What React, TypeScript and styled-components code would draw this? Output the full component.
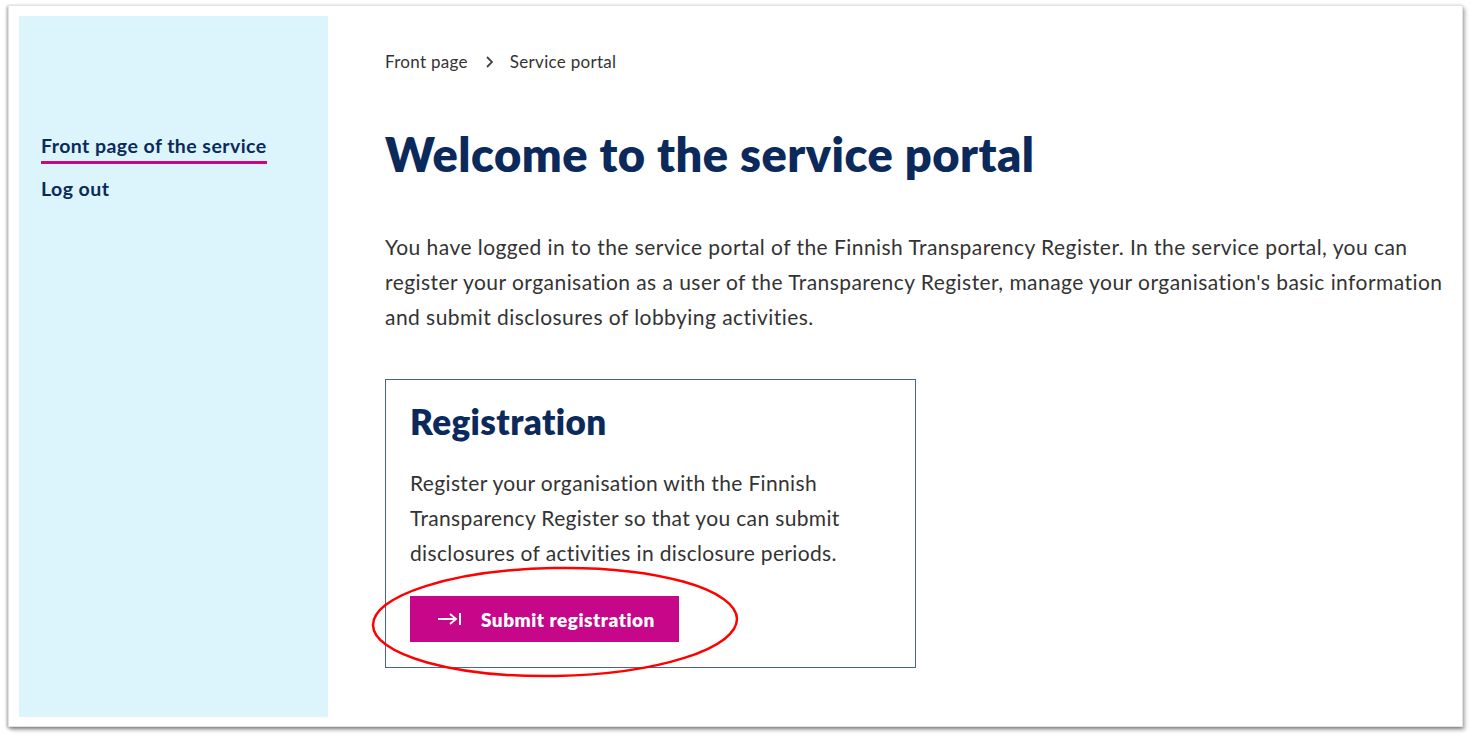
import React from "react";
import styled, { createGlobalStyle } from "styled-components";

const Global = createGlobalStyle`
  html, body { margin: 0; padding: 0; background: #ffffff; }
  body { font-family: Lato, "Noto Sans", sans-serif; width: 1472px; height: 738px; overflow: hidden; }
  * { box-sizing: border-box; }
`;

const Stage = styled.div`
  padding: 5px 9px 11px 8px;
`;

const Window = styled.div`
  width: 1455px;
  height: 722px;
  background: #ffffff;
  border: 1px solid #e2e2e2;
  box-shadow: -1px 1px 3px rgba(0, 0, 0, 0.35), 2px 3px 4px rgba(0, 0, 0, 0.3);
  padding: 10px 0 9px 10px;
  display: flex;
  position: relative;
`;

const Sidebar = styled.nav`
  width: 309px;
  flex: none;
  background: #dcf5fc;
  padding: 117px 0 0 22px;
  display: flex;
  flex-direction: column;
  align-items: flex-start;
  gap: 12px;
`;

const NavLink = styled.a<{ $active?: boolean }>`
  font-family: Lato, sans-serif;
  font-weight: 700;
  font-size: 19.5px;
  line-height: 26px;
  color: #0b2a5b;
  text-decoration: none;
  padding-bottom: ${(p) => (p.$active ? "2px" : "0")};
  border-bottom: ${(p) => (p.$active ? "3px solid #c6078a" : "none")};
  letter-spacing: 0.45px;
`;

const Main = styled.main`
  flex: 1;
  padding: 34px 0 0 57px;
  display: flex;
  flex-direction: column;
  align-items: flex-start;
`;

const Breadcrumb = styled.div`
  display: flex;
  align-items: center;
  gap: 16px;
  font-size: 17px;
  line-height: 24px;
  color: #333333;
  letter-spacing: 0.3px;
`;

const Crumb = styled.span`
  font-family: Lato, sans-serif;
`;

const Title = styled.h1`
  margin: 52px 0 0;
  font-family: Lato, sans-serif;
  font-weight: 800;
  font-size: 47px;
  line-height: 56px;
  color: #0b2a5b;
  letter-spacing: 0.5px;
`;

const Lead = styled.p`
  margin: 47px 0 0;
  font-size: 21px;
  line-height: 35px;
  color: #333333;
  max-width: 1075px;
  letter-spacing: 0.45px;
`;

const Card = styled.section`
  margin-top: 45px;
  width: 531px;
  border: 1px solid #49658f;
  padding: 21px 24px 25px 24px;
  position: relative;
`;

const CardTitle = styled.h2`
  margin: 0;
  font-size: 35px;
  line-height: 40px;
  font-weight: 800;
  color: #0b2a5b;
  letter-spacing: 0.4px;
`;

const CardText = styled.p`
  margin: 24px 0 0;
  font-size: 21px;
  line-height: 35px;
  color: #333333;
  letter-spacing: 0.35px;
`;

const Button = styled.button`
  margin-top: 26px;
  height: 46px;
  width: 269px;
  border: none;
  background: #c6078a;
  color: #ffffff;
  font-family: Lato, sans-serif;
  font-weight: 800;
  font-size: 19px;
  letter-spacing: 0.5px;
  display: flex;
  align-items: center;
  gap: 19px;
  padding: 0 0 0 27px;
  cursor: pointer;
`;

const Ellipse = styled.svg`
  position: absolute;
  left: 362px;
  top: 560px;
  overflow: visible;
  pointer-events: none;
`;

const Chevron = () => (
  <svg width="10" height="14" viewBox="0 0 10 14">
    <path d="M3 2 L8 7 L3 12" fill="none" stroke="#444" strokeWidth="1.8" />
  </svg>
);

const ArrowIcon = () => (
  <svg width="25" height="16" viewBox="0 0 25 16">
    <path d="M1 8 H19 M13 3 L19 8 L13 13" fill="none" stroke="#fff" strokeWidth="1.8" />
    <path d="M23 2 V14" stroke="#fff" strokeWidth="2" />
  </svg>
);

export default function App() {
  return (
    <>
      <Global />
      <Stage>
        <Window>
          <Sidebar>
            <NavLink $active>Front page of the service</NavLink>
            <NavLink>Log out</NavLink>
          </Sidebar>
          <Main>
            <Breadcrumb>
              <Crumb>Front page</Crumb>
              <Chevron />
              <Crumb>Service portal</Crumb>
            </Breadcrumb>
            <Title>Welcome to the service portal</Title>
            <Lead>
              You have logged in to the service portal of the Finnish Transparency Register. In the service portal, you can
              register your organisation as a user of the Transparency Register, manage your organisation's basic information
              and submit disclosures of lobbying activities.
            </Lead>
            <Card>
              <CardTitle>Registration</CardTitle>
              <CardText>
                Register your organisation with the Finnish Transparency Register so that you can submit disclosures of
                activities in disclosure periods.
              </CardText>
              <Button>
                <ArrowIcon />
                Submit registration
              </Button>
            </Card>
          </Main>
          <Ellipse width="370" height="115" viewBox="0 0 370 115">
            <ellipse cx="184" cy="56" rx="182" ry="54" fill="none" stroke="#ff0000" strokeWidth="2.5" transform="rotate(-1 184 56)" />
          </Ellipse>
        </Window>
      </Stage>
    </>
  );
}
